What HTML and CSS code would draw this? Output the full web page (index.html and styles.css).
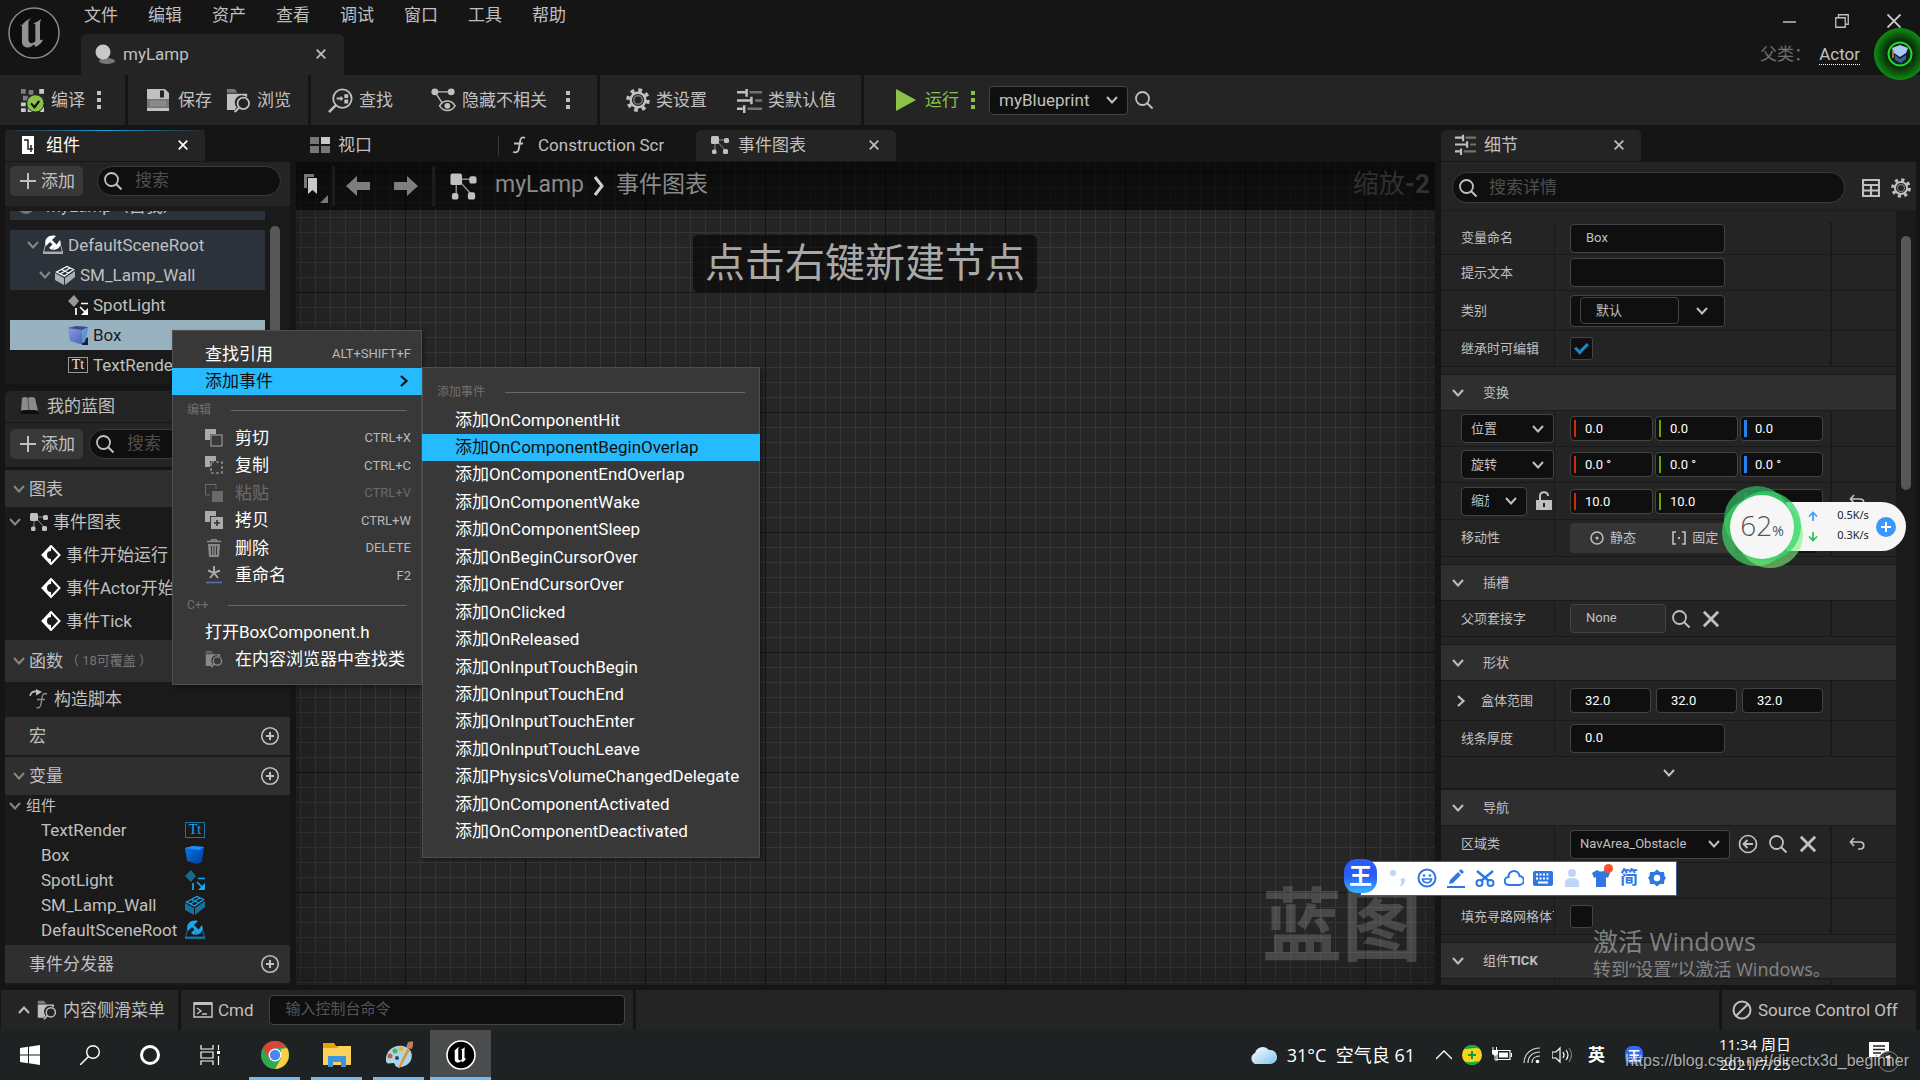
FILE: index.html
```
<!DOCTYPE html>
<html lang="zh-CN">
<head>
	<meta charset="utf-8">
	<title>myLamp</title>
	<link rel="stylesheet" href="styles.css">
</head>
<body>
	<svg class="defs" aria-hidden="true">
		<defs>
			<linearGradient id="boxside" x1="0" y1="0" x2="1" y2="1"><stop offset="0" stop-color="#8ea2e6"/><stop offset="1" stop-color="#3f57b5"/></linearGradient>
			<linearGradient id="bluebox" x1="0" y1="0" x2="1" y2="1"><stop offset="0" stop-color="#0a78e8"/><stop offset="1" stop-color="#003a9c"/></linearGradient>
			<linearGradient id="cloudfill" x1="0" y1="0" x2="1" y2="1"><stop offset="0" stop-color="#ffffff"/><stop offset="1" stop-color="#7fc4ee"/></linearGradient>
			<radialGradient id="orbfill"><stop offset=".45" stop-color="#0a1a0a"/><stop offset="1" stop-color="#0e8a10"/></radialGradient>
		</defs>
		<symbol id="i-down" viewBox="0 0 14 14"><path d="M2 4l5 5.500 5-5.500" fill="none" stroke="currentColor" stroke-width="2"/></symbol>
		<symbol id="i-up" viewBox="0 0 14 14"><path d="M2 10l5-5.500 5 5.500" fill="none" stroke="currentColor" stroke-width="2"/></symbol>
		<symbol id="i-right" viewBox="0 0 14 14"><path d="M4 2l5.500 5-5.500 5" fill="none" stroke="currentColor" stroke-width="2.200"/></symbol>
		<symbol id="i-x" viewBox="0 0 14 14"><path d="M2 2l10 10M12 2L2 12" fill="none" stroke="currentColor" stroke-width="2"/></symbol>
		<symbol id="i-search" viewBox="0 0 20 20"><circle cx="8.500" cy="8.500" r="6.500" fill="none" stroke="currentColor" stroke-width="1.800"/><path d="M13 13l5.500 5.500" stroke="currentColor" stroke-width="2"/></symbol>
		<symbol id="i-plus" viewBox="0 0 16 16"><path d="M8 0v16M0 8h16" stroke="currentColor" stroke-width="2"/></symbol>
		<symbol id="i-addc" viewBox="0 0 20 20"><circle cx="10" cy="10" r="8.300" fill="none" stroke="currentColor" stroke-width="1.600"/><path d="M10 6v8M6 10h8" stroke="currentColor" stroke-width="2"/></symbol>
		<symbol id="i-u" viewBox="0 0 40 40"><path d="M7 12c3-5 7-7 11-9-3 2-3.500 4-3.500 6.500V26c0 2.500 1 4.500 3 4.500s3.500-1 4.500-2V11c0-1-1-2-2.500-2 3-1 7-3 9-5-1 2-1.500 4-1.500 6v15c0 2 1 2.600 3.500 1.500-1.500 4-5 6.500-8.500 8l-1.500-3c-2 2.500-5 4-8 3.500-3.500-.500-5-3-5-6V13.500c0-2.500-.500-3.500-2-3z" fill="currentColor"/></symbol>
		<symbol id="i-graph" viewBox="0 0 20 20"><path d="M5 5h11M5 5v12M6 5l9 10" stroke="currentColor" stroke-width="1" opacity=".7"/><rect x="1" y="1" width="8" height="8" rx="1.500" fill="currentColor"/><rect x="14" y="3" width="5" height="5" rx="1.500" fill="currentColor"/><rect x="13" y="14" width="5" height="5" rx="1.500" fill="currentColor"/><rect x="2" y="14.500" width="4.500" height="4.500" rx="1.500" fill="currentColor"/></symbol>
		<symbol id="i-sliders" viewBox="0 0 26 26"><path d="M0 4.500h9M0 13h14M0 21.500h6" stroke="currentColor" stroke-width="2.600"/><path d="M13 4.500h13M19 13h7M11 21.500h15" stroke="currentColor" stroke-width="2.600" opacity=".5"/><path d="M10 1v8M15 9v8M7.500 18v8" stroke="currentColor" stroke-width="2.600"/></symbol>
		<symbol id="i-gear" viewBox="0 0 24 24"><circle cx="12" cy="12" r="9.800" fill="none" stroke="currentColor" stroke-width="4" stroke-dasharray="3.700 4"/><circle cx="12" cy="12" r="7.300" fill="none" stroke="currentColor" stroke-width="2.400"/><circle cx="12" cy="12" r="4.200" fill="none" stroke="currentColor" stroke-width="1.500" opacity=".55"/></symbol>
		<symbol id="i-browse" viewBox="0 0 26 26"><path d="M1 1h8l3 4H1z" fill="currentColor" opacity=".55"/><path d="M1 6h21v4a7 7 0 0 0-11 10l-2 3H1z" fill="currentColor"/><circle cx="18" cy="16" r="6" fill="none" stroke="currentColor" stroke-width="1.900"/><path d="M14 20l-5 5" stroke="currentColor" stroke-width="2.200"/></symbol>
		<symbol id="i-save" viewBox="0 0 24 24"><path d="M1 1h18l4 4v18H1z" fill="currentColor"/><path d="M1 11h22v9H1z" fill="#777"/><path d="M4 12.500h16v6H4z" fill="#8a8a8a"/><rect x="14" y="2.500" width="4" height="7" fill="#242424"/></symbol>
		<symbol id="i-compile" viewBox="0 0 26 26"><path d="M1 1h5v5H1zM9 2h5v5H9zM3 8h5v5H3zM11 9h5v5h-5z" fill="#7c7c7c"/><path d="M20 1h5v5h-5zM1 15h5v4H1zM1 21h5v4H1zM8 20h5v5H8zM21 20h4v5h-4z" fill="#c8c8c8"/><circle cx="16" cy="16" r="9" fill="#8bc24a" stroke="#1e2a12"/><path d="M11.500 16l3.500 4 5-6.500" fill="none" stroke="#111" stroke-width="2.200"/></symbol>
		<symbol id="i-find" viewBox="0 0 26 26"><circle cx="15" cy="11" r="9.600" fill="none" stroke="currentColor" stroke-width="1.900"/><path d="M8 18l-7 7" stroke="currentColor" stroke-width="2.600"/><path d="M9 10h5v2H9zM13 8l3 3-3 3zM17 6.500h4v4h-4zM17 12h4v4h-4z" fill="currentColor"/></symbol>
		<symbol id="i-hide" viewBox="0 0 26 26"><path d="M4 4h18M4 4l8 12" stroke="currentColor" stroke-width="1.500"/><circle cx="4" cy="4" r="3.600" fill="currentColor"/><circle cx="21" cy="4" r="3.600" fill="currentColor"/><path d="M9 18.500c4-6.500 12-6.500 16 0-4 6.500-12 6.500-16 0z" fill="#242424" stroke="currentColor" stroke-width="1.600"/><circle cx="17" cy="18.500" r="3" fill="currentColor"/></symbol>
		<symbol id="i-dots" viewBox="0 0 4 20"><path d="M0 1h4v4H0zM0 8h4v4H0zM0 15h4v4H0z" fill="currentColor"/></symbol>
		<symbol id="i-root" viewBox="0 0 20 20"><path d="M3 8L.500 17M17 8l2.500 9" stroke="currentColor" stroke-width="1" opacity=".6"/><path d="M3 11C0 4 6-1 13 1L9 5l5 5-2 2-5-5zM10 14.500L17 5c2 5-1 10-7 10z" fill="currentColor"/><path d="M6 13l4-4 3 2-4 4z" fill="currentColor"/><path d="M0 16.500h20V19H0z" fill="currentColor" opacity=".6"/></symbol>
		<symbol id="i-mesh" viewBox="0 0 20 20"><path d="M0 8l9 5v7l-9-5zM10 13l10-7v6l-10 8z" fill="currentColor" opacity=".6"/><path d="M1.500 7L12 1.500l6.500 3L9.500 11zM6.500 4.500l7 3.500M5 9l10-6" fill="none" stroke="currentColor" stroke-width="1.300"/></symbol>
		<symbol id="i-spot" viewBox="0 0 20 20"><path d="M6 0l5 6-5 6-6-6z" fill="currentColor" opacity=".55"/><path d="M8 13v7M13 8.500h7M12 12l6 6" stroke="currentColor" stroke-width="1.700"/><path d="M20 13v7h-7z" fill="currentColor"/></symbol>
		<symbol id="i-box" viewBox="0 0 20 20"><path d="M13 17l7-5v8h-6z" fill="#16222c"/><path d="M0 3l8-2 12 1-3 15-5 2L2 16z" fill="url(#boxside)"/><path d="M14 5l5-3-2 15-3 1z" fill="#5fc0e0" opacity=".5"/><path d="M0 3l8-2 12 1-6 3z" fill="#3c4c86"/></symbol>
		<symbol id="i-bluebox" viewBox="0 0 20 20"><path d="M0 3l8-2 11 1-2 15-5 2L2 16z" fill="url(#bluebox)"/><path d="M0 3l8-2 11 1-5 3z" fill="#1990ff"/></symbol>
		<symbol id="i-event" viewBox="0 0 20 20"><path d="M10 1l8.500 9-8.500 9-8.500-9z" fill="none" stroke="currentColor" stroke-width="2"/><path d="M10 2v4a4 4 0 0 0 0 8v4l-8-8z" fill="currentColor"/></symbol>
		<symbol id="i-fn" viewBox="0 0 20 20"><path d="M18 5c-3-1.500-4.500 0-5 4l-1 6c-.500 3-2 4.500-4.500 3.500M8 10.500h8" fill="none" stroke="currentColor" stroke-width="1.400" opacity=".7"/><path d="M1 7c1-4 4-5 7-4.500" fill="none" stroke="currentColor" stroke-width="1.600"/><path d="M7 0l6 3-6 3.500z" fill="currentColor"/></symbol>
		<symbol id="i-f" viewBox="0 0 14 20"><path d="M13 3c-3-1.500-4.500 0-5 4l-1 6c-.500 3.500-2 5-6 4M2 8.500h9" fill="none" stroke="currentColor" stroke-width="1.800"/></symbol>
		<symbol id="i-cut" viewBox="0 0 18 18"><path d="M0 0h11v5H5v6H0z" fill="currentColor"/><rect x="6" y="6" width="11" height="11" fill="none" stroke="currentColor" stroke-width="1"/></symbol>
		<symbol id="i-copy" viewBox="0 0 18 18"><path d="M0 0h11v5H5v6H0z" fill="currentColor"/><rect x="6" y="6" width="11" height="11" fill="none" stroke="currentColor" stroke-width="1.200" stroke-dasharray="3 2"/></symbol>
		<symbol id="i-paste" viewBox="0 0 18 18"><path d="M11 5V.500H.500V11H5" fill="none" stroke="currentColor"/><rect x="7" y="7" width="11" height="11" fill="currentColor"/></symbol>
		<symbol id="i-dup" viewBox="0 0 18 18"><path d="M0 0h11v5H5v6H0z" fill="currentColor"/><rect x="6" y="6" width="12" height="12" fill="currentColor"/><path d="M12 9v6M9 12h6" stroke="#333" stroke-width="1.600"/></symbol>
		<symbol id="i-trash" viewBox="0 0 18 18"><path d="M2 2.500h14M6 2c0-2 6-2 6 0" fill="none" stroke="currentColor" stroke-width="1.600"/><path d="M3 5h12l-1 13H4z" fill="currentColor"/><path d="M6.500 7v9M9 7v9M11.500 7v9" stroke="#383838"/></symbol>
		<symbol id="i-rename" viewBox="0 0 18 18"><path d="M9 0v7M3 4.500L9 7l6-2.500M5 12l4-5 4 5" stroke="currentColor" stroke-width="2" fill="none"/><path d="M1 16.500h16" stroke="#5973b0" stroke-width="1.500"/></symbol>
		<symbol id="i-reset" viewBox="0 0 16 14"><path d="M5 1L1.500 5 5 9M2 5h9c5 0 5 7 0 7H9" fill="none" stroke="currentColor" stroke-width="1.700"/></symbol>
	</svg>

	<header class="titlebar">
		<svg class="ue-logo" viewBox="0 0 54 54"><circle cx="27" cy="27" r="25" fill="#0e0e0e" stroke="#8a8a8a" stroke-width="1.500"/><use href="#i-u" x="8" y="9" width="37" height="37" color="#8e9294"/></svg>
		<div class="title-main">
			<nav class="menubar">
				<button>文件</button><button>编辑</button><button>资产</button><button>查看</button><button>调试</button><button>窗口</button><button>工具</button><button>帮助</button>
			</nav>
			<div class="doc-tab">
				<svg class="s20" viewBox="0 0 20 20"><ellipse cx="12" cy="17" rx="8" ry="3" fill="#777"/><circle cx="8" cy="8" r="7.500" fill="#c8c8c8"/></svg>
				<span>myLamp</span>
				<button class="close" aria-label="close"><svg><use href="#i-x"/></svg></button>
			</div>
		</div>
		<div class="title-right">
			<div class="win-btns">
				<button aria-label="minimize"><svg viewBox="0 0 14 14"><path d="M0 8h13" stroke="#c0c0c0" stroke-width="1.500"/></svg></button>
				<button aria-label="restore"><svg viewBox="0 0 14 14"><path d="M.750 3.750h9.500v9.500H.750zM3.500 3V.750h9.750v9.500H11" fill="none" stroke="#c0c0c0" stroke-width="1.300"/></svg></button>
				<button aria-label="close window"><svg viewBox="0 0 14 14"><path d="M.500.500l13 13M13.500.500l-13 13" stroke="#d0d0d0" stroke-width="1.800"/></svg></button>
			</div>
			<p class="parent">父类： <a href="#">Actor</a></p>
		</div>
	</header>

	<div class="toolbar">
		<div class="group g1">
			<button><svg class="s25"><use href="#i-compile"/></svg>编译</button>
			<button class="dots" aria-label="more"><svg><use href="#i-dots"/></svg></button>
		</div>
		<div class="group g2">
			<button class="wide"><svg class="s24"><use href="#i-save"/></svg>保存</button>
			<button><svg class="s25"><use href="#i-browse"/></svg>浏览</button>
		</div>
		<div class="group g3">
			<button class="far"><svg class="s25"><use href="#i-find"/></svg>查找</button>
			<button><svg class="s25"><use href="#i-hide"/></svg>隐藏不相关</button>
			<button class="dots" aria-label="more"><svg><use href="#i-dots"/></svg></button>
		</div>
		<div class="group g4">
			<button><svg class="s24"><use href="#i-gear"/></svg>类设置</button>
			<button><svg class="s25"><use href="#i-sliders"/></svg>类默认值</button>
		</div>
		<div class="group g5">
			<button class="play wide"><svg class="s22" viewBox="0 0 22 22"><path d="M1 0l20 11L1 22z" fill="currentColor"/></svg>运行</button>
			<button class="dots play" aria-label="play options"><svg><use href="#i-dots"/></svg></button>
			<span class="sel debug"><select aria-label="debug object"><option>myBlueprint</option></select><svg><use href="#i-down"/></svg></span>
			<button class="lookup" aria-label="find object"><svg class="s20"><use href="#i-search"/></svg></button>
		</div>
	</div>

	<main class="work">
		<section class="left">
			<div class="tabs">
				<div class="tab focus">
					<svg class="t-ico" viewBox="0 0 12 18"><path d="M0 0h12v18H0z" fill="#fff"/><path d="M2 4h4v9h5M6 4v3M9 9v7" fill="none" stroke="#222" stroke-width="1.500"/></svg>
					<span>组件</span>
					<button class="close" aria-label="close"><svg><use href="#i-x"/></svg></button>
				</div>
			</div>
			<div class="panel-tools">
				<button class="add"><svg><use href="#i-plus"/></svg>添加</button>
				<label class="search"><svg class="s20"><use href="#i-search"/></svg><input type="text" placeholder="搜索"></label>
			</div>
			<div class="tree-wrap">
				<ul class="tree">
					<li class="self"><span><svg class="s20" viewBox="0 0 20 20"><circle cx="10" cy="9" r="9" fill="#777"/></svg>myLamp（自我）</span></li>
					<li class="tint d1"><svg class="s14 arrow"><use href="#i-down"/></svg><svg class="s20 white"><use href="#i-root"/></svg>DefaultSceneRoot</li>
					<li class="tint d2"><svg class="s14 arrow"><use href="#i-down"/></svg><svg class="s20 white"><use href="#i-mesh"/></svg>SM_Lamp_Wall</li>
					<li class="d3"><svg class="s20 white"><use href="#i-spot"/></svg>SpotLight</li>
					<li class="d3 picked"><svg class="s20"><use href="#i-box"/></svg>Box</li>
					<li class="d3"><span class="tt">Tt</span>TextRender</li>
				</ul>
				<div class="thumb tree-thumb"></div>
			</div>
			<div class="tabs second">
				<div class="tab">
					<svg class="s20" viewBox="0 0 20 20"><path d="M3 2q3-2 6 0 4-2 7 0l3 13q-4-2-8 0-5-2-9 0z" fill="#8b8b8b"/><path d="M9 2l1 13" stroke="#555"/><path d="M1 15q9-2 18 0l1 3H2z" fill="#0e0e0e"/></svg>
					<span>我的蓝图</span>
				</div>
			</div>
			<div class="panel-tools bp-tools">
				<button class="add"><svg><use href="#i-plus"/></svg>添加</button>
				<label class="search"><svg class="s20"><use href="#i-search"/></svg><input type="text" placeholder="搜索"></label>
			</div>
			<div class="blueprint">
				<h3 class="head graphs"><svg class="s14 arrow"><use href="#i-down"/></svg>图表</h3>
				<ul class="events">
					<li class="top"><svg class="s14 arrow"><use href="#i-down"/></svg><svg class="s20"><use href="#i-graph"/></svg>事件图表</li>
					<li><svg class="s20 white"><use href="#i-event"/></svg>事件开始运行</li>
					<li><svg class="s20 white"><use href="#i-event"/></svg>事件Actor开始重叠</li>
					<li><svg class="s20 white"><use href="#i-event"/></svg>事件Tick</li>
				</ul>
				<h3 class="head fn-head"><svg class="s14 arrow"><use href="#i-down"/></svg>函数<small>（ 18可覆盖 ）</small></h3>
				<p class="fn"><svg class="s20"><use href="#i-fn"/></svg>构造脚本</p>
				<h3 class="head flat macros">宏<button aria-label="add macro"><svg class="s20"><use href="#i-addc"/></svg></button></h3>
				<h3 class="head"><svg class="s14 arrow"><use href="#i-down"/></svg>变量<button aria-label="add variable"><svg class="s20"><use href="#i-addc"/></svg></button></h3>
				<p class="cat"><svg class="s14 arrow"><use href="#i-down"/></svg>组件</p>
				<ul class="vars">
					<li><span>TextRender</span><i class="tt">Tt</i></li>
					<li><span>Box</span><svg class="s20"><use href="#i-bluebox"/></svg></li>
					<li><span>SpotLight</span><svg class="s20"><use href="#i-spot"/></svg></li>
					<li><span>SM_Lamp_Wall</span><svg class="s20"><use href="#i-mesh"/></svg></li>
					<li><span>DefaultSceneRoot</span><svg class="s20"><use href="#i-root"/></svg></li>
				</ul>
				<h3 class="head flat">事件分发器<button aria-label="add dispatcher"><svg class="s20"><use href="#i-addc"/></svg></button></h3>
			</div>
		</section>

		<section class="center">
			<div class="tabs">
				<div class="tab idle viewport"><svg class="s20" viewBox="0 0 20 20"><path d="M0 2h9v7H0zM0 11h9v7H0zM11 11h9v7h-9z" fill="#777"/><path d="M11 2h9v7h-9z" fill="#c8c8c8"/></svg><span>视口</span></div>
				<div class="tab idle construct"><svg class="f-ico"><use href="#i-f"/></svg><span class="clip">Construction Script</span></div>
				<div class="tab"><svg class="s20"><use href="#i-graph"/></svg><span>事件图表</span><button class="close" aria-label="close"><svg><use href="#i-x"/></svg></button></div>
			</div>
			<div class="graph">
				<div class="crumbs">
					<button class="bookmark" aria-label="bookmarks"><svg viewBox="0 0 30 40"><path d="M3 8h10v3H6v11H3z" fill="#777"/><path d="M7 12h9v16l-4.500-4L7 28z" fill="#c8c8c8"/><path d="M27 29v8h-8z" fill="#777"/></svg></button>
					<div class="nav-btns">
						<button aria-label="back"><svg viewBox="0 0 24 20"><path d="M0 10L11 0v6h13v8H11v6z" fill="#7e7e7e"/></svg></button>
						<button aria-label="forward"><svg viewBox="0 0 24 20"><path d="M24 10L13 0v6H0v8h13v6z" fill="#7e7e7e"/></svg></button>
					</div>
					<svg class="s29"><use href="#i-graph"/></svg>
					<span class="path">myLamp<svg class="sep" viewBox="0 0 14 20"><path d="M3 1l7 9-7 9" fill="none" stroke="#d0d0d0" stroke-width="3"/></svg>事件图表</span>
					<span class="zoom">缩放<b>-2</b></span>
				</div>
				<p class="hint">点击右键新建节点</p>
				<p class="mark">蓝图</p>
			</div>
		</section>

		<section class="right">
			<div class="tabs">
				<div class="tab"><svg class="s21"><use href="#i-sliders"/></svg><span>细节</span><button class="close" aria-label="close"><svg><use href="#i-x"/></svg></button></div>
			</div>
			<div class="detail-tools">
				<label class="search"><svg class="s20"><use href="#i-search"/></svg><input type="text" placeholder="搜索详情"></label>
				<button aria-label="property matrix"><svg class="s18" viewBox="0 0 18 18"><path d="M1 1h16v16H1zM1 6h16M1 11.500h16M9 6v11" fill="none" stroke="currentColor" stroke-width="2.200"/></svg></button>
				<button aria-label="settings"><svg class="s20"><use href="#i-gear"/></svg></button>
			</div>
			<div class="details">
				<div class="rows">
					<div class="row first"><label for="vname">变量命名</label><div class="val"><input id="vname" class="text" value="Box"></div><i></i></div>
					<div class="row"><label for="tip">提示文本</label><div class="val"><input id="tip" class="text"></div><i></i></div>
					<div class="row tall"><label for="cat">类别</label><div class="val"><span class="combo"><input id="cat" value="默认"><svg class="s14"><use href="#i-down"/></svg></span></div><i></i></div>
					<div class="row"><label for="edit">继承时可编辑</label><div class="val"><input id="edit" type="checkbox" class="check" checked></div><i></i></div>
					<h4 class="gap"><svg class="s14"><use href="#i-down"/></svg>变换</h4>
					<div class="row"><div class="name"><span class="sel loc"><select aria-label="location"><option>位置</option></select><svg><use href="#i-down"/></svg></span></div><div class="val"><div class="vec"><input class="r" aria-label="X" value="0.0"><input class="g" aria-label="Y" value="0.0"><input class="b" aria-label="Z" value="0.0"></div></div><i></i></div>
					<div class="row"><div class="name"><span class="sel loc"><select aria-label="rotation"><option>旋转</option></select><svg><use href="#i-down"/></svg></span></div><div class="val"><div class="vec"><input class="r" aria-label="X" value="0.0 °"><input class="g" aria-label="Y" value="0.0 °"><input class="b" aria-label="Z" value="0.0 °"></div></div><i></i></div>
					<div class="row mid"><div class="name"><span class="sel scale"><select aria-label="scale"><option>缩放</option></select><svg><use href="#i-down"/></svg></span><svg class="lock" viewBox="0 0 16 20"><path d="M4 9V5c0-5 8-5 8 0" fill="none" stroke="currentColor" stroke-width="2"/><path d="M0 9h16v10H0z" fill="currentColor"/><path d="M7 12h2v4H7z" fill="#222"/></svg></div><div class="val"><div class="vec"><input class="r" aria-label="X" value="10.0"><input class="g" aria-label="Y" value="10.0"><input class="b" aria-label="Z"></div></div><i><svg class="reset"><use href="#i-reset"/></svg></i></div>
					<div class="row mid"><span class="name">移动性</span><div class="val"><div class="seg"><button><svg class="s14" viewBox="0 0 14 14"><circle cx="7" cy="7" r="6" fill="none" stroke="currentColor" stroke-width="1.500"/><circle cx="7" cy="7" r="1.500" fill="currentColor"/></svg>静态</button><button><svg class="s14" viewBox="0 0 14 14"><path d="M4 1H1v12h3M10 1h3v12h-3" fill="none" stroke="currentColor" stroke-width="1.600"/><path d="M6 6h2v2H6z" fill="currentColor"/></svg>固定</button><button class="on" aria-label="movable"></button></div></div><i></i></div>
					<h4 class="gap"><svg class="s14"><use href="#i-down"/></svg>插槽</h4>
					<div class="row"><label for="socket">父项套接字</label><div class="val"><input id="socket" class="text socket" value="None" readonly><button aria-label="browse socket"><svg class="s20"><use href="#i-search"/></svg></button><button aria-label="clear socket"><svg class="s20"><use href="#i-x"/></svg></button></div><i></i></div>
					<h4 class="gap"><svg class="s14"><use href="#i-down"/></svg>形状</h4>
					<div class="row tall"><div class="name fold"><svg class="s14"><use href="#i-right"/></svg>盒体范围</div><div class="val"><div class="vec plain"><input aria-label="X" value="32.0"><input aria-label="Y" value="32.0"><input aria-label="Z" value="32.0"></div></div><i></i></div>
					<div class="row"><label for="thick">线条厚度</label><div class="val"><input id="thick" class="text thick" value="0.0"></div><i></i></div>
					<button class="more" aria-label="show advanced"><svg class="s14"><use href="#i-down"/></svg></button>
					<h4><svg class="s14"><use href="#i-down"/></svg>导航</h4>
					<div class="row mid"><label for="area">区域类</label><div class="val"><span class="sel area"><select id="area"><option>NavArea_Obstacle</option></select><svg><use href="#i-down"/></svg></span><button aria-label="use selected"><svg class="s20" viewBox="0 0 20 20"><circle cx="10" cy="10" r="8.500" fill="none" stroke="currentColor" stroke-width="1.700"/><path d="M15 10H6M9.500 6L5.500 10l4 4" fill="none" stroke="currentColor" stroke-width="1.800"/></svg></button><button aria-label="browse class"><svg class="s20"><use href="#i-search"/></svg></button><button aria-label="clear class"><svg class="s20"><use href="#i-x"/></svg></button></div><i><svg class="reset"><use href="#i-reset"/></svg></i></div>
					<div class="row"><span class="name"></span><div class="val"></div><i></i></div>
					<div class="row"><label for="fill">填充寻路网格体下方</label><div class="val"><input id="fill" type="checkbox" class="check"></div><i></i></div>
					<h4 class="gap"><svg class="s14"><use href="#i-down"/></svg>组件<b>TICK</b></h4>
					<div class="row"><span class="name"></span><div class="val"></div><i></i></div>
				</div>
				<div class="thumb detail-thumb"></div>
			</div>
		</section>

		<div class="menu ctx">
			<ul>
				<li><button>查找引用<kbd>ALT+SHIFT+F</kbd></button></li>
				<li><button class="hot">添加事件<svg class="s14"><use href="#i-right"/></svg></button></li>
			</ul>
			<h5>编辑</h5>
			<ul class="iconed">
				<li><button><svg class="s18"><use href="#i-cut"/></svg>剪切<kbd>CTRL+X</kbd></button></li>
				<li><button><svg class="s18"><use href="#i-copy"/></svg>复制<kbd>CTRL+C</kbd></button></li>
				<li><button disabled><svg class="s18"><use href="#i-paste"/></svg>粘贴<kbd>CTRL+V</kbd></button></li>
				<li><button><svg class="s18"><use href="#i-dup"/></svg>拷贝<kbd>CTRL+W</kbd></button></li>
				<li><button><svg class="s18 dim"><use href="#i-trash"/></svg>删除<kbd>DELETE</kbd></button></li>
				<li><button><svg class="s18"><use href="#i-rename"/></svg>重命名<kbd>F2</kbd></button></li>
			</ul>
			<h5>C++</h5>
			<ul>
				<li><button>打开BoxComponent.h</button></li>
				<li><button><svg class="s18 dim"><use href="#i-browse"/></svg>在内容浏览器中查找类</button></li>
			</ul>
		</div>

		<div class="menu sub">
			<h5>添加事件</h5>
			<ul>
				<li><button>添加OnComponentHit</button></li>
				<li><button class="hot">添加OnComponentBeginOverlap</button></li>
				<li><button>添加OnComponentEndOverlap</button></li>
				<li><button>添加OnComponentWake</button></li>
				<li><button>添加OnComponentSleep</button></li>
				<li><button>添加OnBeginCursorOver</button></li>
				<li><button>添加OnEndCursorOver</button></li>
				<li><button>添加OnClicked</button></li>
				<li><button>添加OnReleased</button></li>
				<li><button>添加OnInputTouchBegin</button></li>
				<li><button>添加OnInputTouchEnd</button></li>
				<li><button>添加OnInputTouchEnter</button></li>
				<li><button>添加OnInputTouchLeave</button></li>
				<li><button>添加PhysicsVolumeChangedDelegate</button></li>
				<li><button>添加OnComponentActivated</button></li>
				<li><button>添加OnComponentDeactivated</button></li>
			</ul>
		</div>
	</main>

	<footer class="status">
		<button class="drawer"><svg class="s14"><use href="#i-up"/></svg><svg class="s20"><use href="#i-browse"/></svg>内容侧滑菜单</button>
		<div class="console">
			<svg class="s20" viewBox="0 0 20 20"><path d="M1 3h18v14H1z" fill="none" stroke="currentColor" stroke-width="1.500"/><path d="M1 2h18v3H1z" fill="currentColor"/><path d="M4 8l4 3-4 3M9 14h5" fill="none" stroke="currentColor" stroke-width="1.400"/></svg>
			<label for="cmd">Cmd</label>
			<input id="cmd" type="text" placeholder="输入控制台命令">
		</div>
		<div class="filler"></div>
		<button class="source"><svg class="s20" viewBox="0 0 20 20"><circle cx="10" cy="10" r="8.500" fill="none" stroke="currentColor" stroke-width="2"/><path d="M16 4L4 16" stroke="currentColor" stroke-width="2"/></svg>Source Control Off</button>
	</footer>

	<footer class="taskbar">
		<button aria-label="start"><svg class="s20" viewBox="0 0 20 20"><path d="M0 3l8-1.200V9.500H0zM9 1.700L20 0v9.500H9zM0 10.500h8v7.700L0 17zM9 10.500h11V20L9 18.300z" fill="#fff"/></svg></button>
		<button aria-label="search"><svg class="s20" viewBox="0 0 20 20"><circle cx="13" cy="7" r="6.300" fill="none" stroke="#fff" stroke-width="1.400"/><path d="M8.500 11.500L0 20" stroke="#fff" stroke-width="1.500"/></svg></button>
		<button aria-label="cortana"><svg class="s20" viewBox="0 0 20 20"><circle cx="10" cy="10" r="8.500" fill="none" stroke="#fff" stroke-width="3"/></svg></button>
		<button aria-label="task view"><svg class="s20" viewBox="0 0 20 20"><path d="M1 0v4h12V0M1 20v-4h12v4M1 7h12v6H1zM18.500 0v5M18.500 11v9" fill="none" stroke="#fff" stroke-width="1.200"/><path d="M17 6h3v3h-3z" fill="#fff"/></svg></button>
		<button class="app" aria-label="chrome"><svg class="s28" viewBox="0 0 28 28"><circle cx="14" cy="14" r="14" fill="#30a852"/><path d="M14 0a14 14 0 0 1 12.100 7H14L8 17.500 1.900 7A14 14 0 0 1 14 0z" fill="#dc4437"/><path d="M26.100 7A14 14 0 0 1 14 28l6-10.500V8z" fill="#fccd3f"/><circle cx="14" cy="14" r="6.500" fill="#fff"/><circle cx="14" cy="14" r="5.200" fill="#4a86f0"/></svg></button>
		<button class="app" aria-label="explorer"><svg class="s28" viewBox="0 0 28 28"><path d="M0 2h11l2 3h15v3H0z" fill="#e5a50a"/><path d="M0 7h14l2-2h12v19H0z" fill="#fbd15a"/><path d="M5 15h18v11h-5v-5h-8v5H5z" fill="#3b94dc"/></svg></button>
		<button class="app" aria-label="paint"><svg class="s28" viewBox="0 0 28 28"><path d="M1 20C0 10 9 3 18 5s10 9 8 14-9 8-14 7c-3-1-1-4-4-4s-6 2-7-2z" fill="#a9d6ef"/><circle cx="5" cy="15" r="2.500" fill="#e5532d"/><circle cx="10" cy="10" r="2.500" fill="#57b04a"/><circle cx="16" cy="8" r="2.500" fill="#f0b429"/><circle cx="12" cy="17" r="2" fill="#2a4a66"/><path d="M13 27L22 8l3 1-10 18z" fill="#e8912c"/><path d="M21 7l2-6 6-1-2 8z" fill="#b98457"/></svg></button>
		<button class="app active" aria-label="unreal editor"><svg class="s30" viewBox="0 0 30 30"><circle cx="15" cy="15" r="14" fill="#000" stroke="#fff" stroke-width="1.600"/><use href="#i-u" x="5" y="5" width="20" height="20" color="#fff"/></svg></button>
		<div class="tray">
			<svg class="cloud" viewBox="0 0 28 20"><path d="M6 19a6 6 0 0 1 0-11 8 8 0 0 1 14-3 7 7 0 0 1 2 14z" fill="url(#cloudfill)"/></svg>
			<span class="weather">31°C&nbsp; 空气良 61</span>
			<svg class="s16" viewBox="0 0 16 16"><path d="M0 12l8-8 8 8" fill="none" stroke="#fff" stroke-width="1.300"/></svg>
			<svg class="s20" viewBox="0 0 20 20"><circle cx="10" cy="10" r="10" fill="#f8d31c"/><path d="M2 4a10 10 0 0 1 16 0c-5-2-8 0-16 0zM18 16a10 10 0 0 1-16 0c5 2 9 1 16 0z" fill="#17a745"/><path d="M10 6v8M6 10h8" stroke="#0d9a3b" stroke-width="2"/></svg>
			<svg class="s20" viewBox="0 0 20 20"><path d="M5 5.500h13v9H5z" fill="none" stroke="#fff" stroke-width="1.200"/><path d="M7 7.500h9v5H7zM19 8h1v4h-1zM0 5h6v4l-3 2-3-2z" fill="#fff"/><path d="M1 2v3M4.500 2v3M3 10v5h3" stroke="#fff" fill="none"/></svg>
			<svg class="s20" viewBox="0 0 20 20"><path d="M2 18C2 9 9 3 18 3M6 18c0-7 5-11 12-11M10 18c0-4 3-7 8-7" fill="none" stroke="#ddd" stroke-width="1.200"/><circle cx="15.500" cy="16.500" r="1.800" fill="#fff"/></svg>
			<svg class="s20" viewBox="0 0 20 20"><path d="M0 7h4l4-4v14l-4-4H0z" fill="none" stroke="#fff" stroke-width="1.200"/><path d="M11 7q2 3 0 6M14 5q4 5 0 10" fill="none" stroke="#fff" stroke-width="1.200"/><path d="M17 3q5 7 0 14" fill="none" stroke="#777" stroke-width="1.200"/></svg>
			<span class="lang">英</span>
			<span class="ime-mini">王</span>
			<div class="clock"><span>11:34 周日</span><span>2021/7/25</span></div>
			<div class="notice"><svg viewBox="0 0 20 18"><path d="M0 0h20v15h-4v3l-4-3H0z" fill="#fff"/><path d="M4 4h12M4 7.500h12M4 11h8" stroke="#222" stroke-width="1.300"/></svg><b>1</b></div>
		</div>
	</footer>

	<!-- floating desktop tools -->
	<svg class="orb" viewBox="0 0 52 52"><circle cx="26" cy="26" r="25.500" fill="url(#orbfill)" stroke="#128a14"/><circle cx="26" cy="26" r="11.500" fill="#142028" stroke="#1be01b" stroke-width="2"/><path d="M18 20l8-3 8 3-2 5-6 4-6-4z" fill="#a9cdf0"/><path d="M21 27l5 4 6-4v4l-5 4-6-3z" fill="#3d5f98"/><path d="M19 22v8" stroke="#c99a3a" stroke-width="1.500"/></svg>
	<div class="netball">
		<div class="speeds">
			<svg viewBox="0 0 10 34"><path d="M5 11V3M1 6.500L5 2.500l4 4" fill="none" stroke="#3a9bff" stroke-width="1.700"/><path d="M5 22v8M1 26.500l4 4 4-4" fill="none" stroke="#27bf55" stroke-width="1.700"/></svg>
			<p><span>0.5K/s</span><span>0.3K/s</span></p>
			<button aria-label="boost"><svg class="s20" viewBox="0 0 20 20"><circle cx="10" cy="10" r="10" fill="#3a98fb"/><path d="M10 5v10M5 10h10" stroke="#fff" stroke-width="2"/></svg></button>
		</div>
		<svg class="glow" viewBox="0 0 84 88"><circle cx="37" cy="37" r="33" fill="#2c9a55" opacity=".9"/><circle cx="36" cy="50" r="34" fill="#3fd465" opacity=".7"/><circle cx="50" cy="53" r="33" fill="#7ef27f" opacity=".6"/><circle cx="46" cy="44" r="35" fill="#35d46c" opacity=".75"/><circle cx="42" cy="45" r="32" fill="#f6f6f6"/></svg>
		<div class="ball">62<small>%</small></div>
	</div>
	<div class="ime">
		<b class="ime-logo">王</b>
		<svg viewBox="0 0 20 20" class="faint"><circle cx="5" cy="5" r="3" fill="currentColor"/><path d="M13 12a2 2 0 1 1 3 2q0 3-4 4 2-2 2-3z" fill="currentColor" stroke="currentColor"/></svg>
		<svg viewBox="0 0 20 20"><circle cx="10" cy="10" r="8.500" fill="none" stroke="currentColor" stroke-width="2"/><path d="M5.500 11c1 5 8 5 9 0z" fill="none" stroke="currentColor" stroke-width="1.600"/><circle cx="7" cy="7.500" r="1.300" fill="currentColor"/><circle cx="13" cy="7.500" r="1.300" fill="currentColor"/></svg>
		<svg viewBox="0 0 20 20"><path d="M1 19h18" stroke="currentColor" stroke-width="2"/><path d="M3 16l1-4 8-8 3 3-8 8zM13 3l2-2 3 3-2 2z" fill="currentColor"/></svg>
		<svg viewBox="0 0 20 20"><path d="M2 3l12 10M18 3L6 13" stroke="currentColor" stroke-width="2.400"/><circle cx="4.500" cy="15" r="3" fill="none" stroke="currentColor" stroke-width="2"/><circle cx="15.500" cy="15" r="3" fill="none" stroke="currentColor" stroke-width="2"/></svg>
		<svg viewBox="0 0 20 20"><path d="M5 17a4 4 0 0 1-.500-8 5.500 5.500 0 0 1 11-1A4.500 4.500 0 0 1 15 17z" fill="none" stroke="currentColor" stroke-width="2"/></svg>
		<svg viewBox="0 0 20 20"><rect y="3" width="20" height="15" rx="2" fill="currentColor"/><path d="M3 6.500h14M3 10.500h14" stroke="#fff" stroke-width="2" stroke-dasharray="2 1.500"/><path d="M5 14.500h10" stroke="#fff" stroke-width="2"/></svg>
		<svg viewBox="0 0 20 20" class="faint"><circle cx="10" cy="5" r="4" fill="currentColor"/><path d="M3 19v-4q0-5 7-5t7 5v4z" fill="currentColor"/></svg>
		<svg viewBox="0 0 20 20"><path d="M1 5l5-3q4 3 8 0l5 3-2 5-2-1v10H5V9l-2 1z" fill="currentColor"/></svg>
		<span>简</span>
		<svg viewBox="0 0 20 20"><path d="M10 1.500l3 2.500 4 0 .500 4L19 10l-1.500 2-.500 4h-4l-3 2.500L7 16H3l-.500-4L1 10l1.500-2L3 4h4z" fill="currentColor"/><circle cx="10" cy="10" r="3.200" fill="#fff"/></svg>
		<i class="red-dot"></i>
	</div>
	<div class="activate"><p>激活 Windows</p><p>转到“设置”以激活 Windows。</p></div>
	<div class="blog-url">https://blog.csdn.net/directx3d_beginner</div>
</body>
</html>
```
FILE: styles.css
```
* {box-sizing: border-box;}
body {
	margin: 0;
	height: 100vh;
	display: flex;
	flex-direction: column;
	overflow: hidden;
	position: relative;
	background: #151515;
	color: #c0c0c0;
	font: 17px/20px Roboto, "Noto Sans CJK SC", sans-serif;
}
ul, p, h3, h4, h5 {margin: 0; padding: 0; list-style: none; font-weight: normal;}
button {border: 0; padding: 0; background: none; color: inherit; font: inherit; display: flex; align-items: center; white-space: nowrap;}
input, select {font: inherit; color: inherit; min-width: 0; margin: 0;}
svg {flex: none; display: block;}
i {font-style: normal;}
.defs {position: absolute; width: 0; height: 0;}
.s14 {width: 14px; height: 14px;}
.s16 {width: 16px; height: 16px;}
.s18 {width: 18px; height: 18px;}
.s20 {width: 20px; height: 20px;}
.s21 {width: 21px; height: 21px;}
.s22 {width: 22px; height: 22px;}
.s24 {width: 24px; height: 24px;}
.s25 {width: 25px; height: 25px;}
.s28 {width: 28px; height: 28px;}
.s29 {width: 29px; height: 29px;}
.s30 {width: 30px; height: 30px;}
.white {color: #fff;}
.dim {opacity: .7;}

/* title bar */
.titlebar {display: flex; height: 75px; flex: none;}
.ue-logo {width: 54px; height: 54px; margin: 6px 20px 0 7px;}
.title-main {display: flex; flex-direction: column; justify-content: space-between;}
.menubar {display: flex; gap: 30px; padding: 5px 0 0 3px;}
.doc-tab {display: flex; align-items: center; width: 263px; height: 41px; padding: 0 17px 2px 14px; border-radius: 5px 5px 0 0; background: #242424;}
.doc-tab span {margin-left: 8px;}
.close {margin-left: auto;}
.close svg {width: 12px; height: 12px;}
.title-right {margin-left: auto; display: flex; flex-direction: column; align-items: flex-end;}
.win-btns {display: flex; gap: 38px; padding: 14px 19px 0 0;}
.win-btns svg {width: 14px; height: 14px;}
.parent {padding: 16px 60px 0 0; color: #6f6f6f;}
.parent a {color: #c0c0c0; text-decoration: none; border-bottom: 1px dotted #fff; margin-left: 4px;}

/* main toolbar */
.toolbar {display: flex; gap: 3px; height: 50px; flex: none;}
.group {display: flex; align-items: center; background: #242424;}
.group button {gap: 6px;}
.group .wide {gap: 8px;}
.group .dots svg {width: 4px; height: 20px;}
.g1 {gap: 12px; padding: 0 24px 0 20px;}
.g2 {gap: 14px; padding: 0 17px 0 18px;}
.g3 {gap: 19px; padding: 0 27px 0 17px;}
.g3 .far {margin-right: 19px;}
.g4 {gap: 30px; padding: 0 25px 0 26px;}
.g5 {gap: 12px; padding: 0 0 0 31px; flex: 1;}
.play {color: #8bc34a;}
.g5 .lookup {margin-left: -6px;}
.sel {position: relative; display: flex; align-items: center;}
.sel select {appearance: none; width: 100%; height: 29px; padding: 0 28px 0 9px; border: 1px solid #444; border-radius: 4px; background: #0f0f0f; outline: 0;}
.sel svg {position: absolute; right: 9px; width: 14px; height: 14px; pointer-events: none;}
.debug {width: 139px; margin-left: 2px;}

/* docked panels */
.work {display: flex; gap: 6px; flex: 1; min-height: 0; padding: 5px 4px 0 5px;}
.left {width: 285px; flex: none; display: flex; flex-direction: column;}
.center {flex: 1; min-width: 0; display: flex; flex-direction: column;}
.right {width: 475px; flex: none; display: flex; flex-direction: column; min-height: 0;}
.tabs {display: flex; height: 31px; margin-bottom: 1px; flex: none;}
.tab {display: flex; align-items: center; gap: 8px; width: 200px; padding: 0 16px 2px 14px; border-radius: 5px 5px 0 0; background: #242424;}
.idle {background: none;}
.focus {color: #fff; padding-left: 17px; gap: 12px; border-top: 1px solid; border-image: linear-gradient(90deg, #242424, #1f9fdd, #242424) 1;}
.t-ico {width: 12px; height: 18px;}
.center .viewport {margin-right: 2px;}
.construct {padding: 0 32px 2px 13px; gap: 12px; border-left: 1px solid #3a3a3a; border-radius: 0; height: 20px; margin-top: 6px; width: 198px;}
.f-ico {width: 14px; height: 20px;}
.clip {overflow: hidden; white-space: nowrap;}

.panel-tools {display: flex; gap: 14px; padding: 4px 9px 10px 5px; background: #242424; flex: none;}
.add {height: 30px; width: 73px; flex: none; gap: 5px; padding-left: 10px; border-radius: 5px; background: #383838;}
.add svg {width: 16px; height: 16px;}
.search {display: flex; align-items: center; gap: 12px; flex: 1; min-width: 0; height: 30px; padding: 0 6px 0 5px; border: 1px solid #3a3a3a; border-radius: 15px; background: #0f0f0f;}
.search input {flex: 1; width: 0; border: 0; padding: 0 0 2px; background: none; outline: 0;}
.search input::placeholder {color: #4e4e4e;}

.tree-wrap {display: flex; gap: 5px; height: 178px; padding: 5px 10px 4px 5px; background: #1a1a1a; flex: none;}
.tree {flex: 1;}
.tree li {display: flex; align-items: center; gap: 5px; height: 30px; white-space: nowrap;}
.tree .self {height: 9px; margin-bottom: 10px; padding-left: 6px; align-items: flex-end; overflow: hidden; background: #2b323a;}
.self span {display: flex; align-items: center; gap: 10px; height: 28px;}
.tree .tint {background: #2b323a;}
.tree .d1 {padding-left: 16px;}
.tree .d2 {padding-left: 28px;}
.tree .tint .arrow {margin-right: -2px;}
.tree .d3 {padding-left: 58px;}
.tree .picked {background: #99b2bf; color: #1c1c1c;}
.arrow {color: #888;}
.tt {width: 20px; height: 16px; border: 1px solid #999; color: #eee; font: 14px/13px "Liberation Serif", serif; text-align: center;}
.thumb {width: 10px; border-radius: 5px; background: #575757;}
.tree-thumb {margin-top: 15px;}
.second {margin-top: 7px;}
.bp-tools {gap: 6px; padding-top: 6px; padding-bottom: 8px;}

.blueprint {flex: 1; margin-top: 3px; background: #1a1a1a;}
.head {display: flex; align-items: center; gap: 3px; height: 38px; padding: 0 10px 0 7px; font-size: 17px; background: #2f2f2f;}
.head button {margin-left: auto;}
.graphs {height: 37px;}
.flat {padding-left: 24px;}
.macros {margin-bottom: 2px;}
.head small {font-size: 13px; color: #777;}
.events {padding-bottom: 2px;}
.events li {display: flex; align-items: center; gap: 5px; height: 33px; padding: 0 0 2px 36px; white-space: nowrap;}
.events .top {height: 32px; padding-left: 3px;}
.events .top .s20 {margin: 0 -1px 0 2px;}
.fn-head {height: 42px;}
.fn {display: flex; align-items: center; gap: 5px; height: 35px; padding: 0 0 2px 24px;}
.cat {display: flex; align-items: center; gap: 4px; height: 22px; padding-left: 3px; font-size: 15px;}
.vars {padding-bottom: 3px; color: #c0c0c0;}
.vars li {display: grid; grid-template-columns: 144px 20px; align-items: center; height: 25px; padding-left: 36px; white-space: nowrap;}
.vars svg, .vars .tt {color: #1ba7f0; border-color: #1b74a3;}

/* event graph */
.graph {
	flex: 1;
	position: relative;
	box-shadow: inset 0 0 70px rgba(0,0,0,.35);
	background-color: #262626;
	background-image:
		linear-gradient(90deg, #141414 1px, transparent 1px),
		linear-gradient(#141414 1px, transparent 1px),
		linear-gradient(90deg, #353535 1px, transparent 1px),
		linear-gradient(#353535 1px, transparent 1px);
	background-size: 120px 120px, 120px 120px, 15px 15px, 15px 15px;
	background-position: 109px 0, 0 10px, 4px 0, 0 10px;
}
.crumbs {display: flex; align-items: center; height: 48px; padding: 0 5px; background: rgba(0,0,0,.6);}
.bookmark svg {width: 30px; height: 40px;}
.nav-btns {display: flex; align-items: center; gap: 24px; height: 40px; margin: 0 14px 0 1px; padding: 0 14px 0 11px; border: solid #1c1c1c; border-width: 0 3px;}
.nav-btns svg {width: 24px; height: 20px;}
.path {display: flex; align-items: center; margin: 0 0 2px 17px; font-size: 23px; line-height: 28px; color: #8a8a8a;}
.sep {width: 14px; height: 20px; margin: 2px 10px 0 8px;}
.zoom {margin: 0 0 4px auto; font-size: 26px; line-height: 30px; color: #303030;}
.hint {position: absolute; top: 73px; left: 397px; padding: 1px 12px 0; font-size: 40px; line-height: 56px; border-radius: 5px; background: rgba(0,0,0,.55); color: #a8a8a8; white-space: nowrap;}
.mark {position: absolute; right: 13px; bottom: 12px; font-size: 80px; line-height: 92px; font-weight: bold; color: rgba(255,255,255,.17);}

/* details */
.detail-tools {display: flex; align-items: center; gap: 11px; height: 49px; padding: 3px 5px 0 11px; flex: none; background: #242424; border-bottom: 1px solid #1c1c1c;}
.detail-tools .search {margin-right: 6px; height: 31px; gap: 11px;}
.details {display: flex; flex: 1; min-height: 0; overflow: hidden; background: #1a1a1a; font-size: 13px; line-height: 16px;}
.rows {flex: 1; padding-top: 11px; background: #242424;}
.row {display: grid; grid-template-columns: 114px 277px 64px; height: 36px; border-bottom: 1px solid #1a1a1a;}
.row > * {display: flex; align-items: center; overflow: hidden; white-space: nowrap; border-right: 1px solid #1a1a1a;}
.row > .val {padding-left: 15px; gap: 10px; border-right-width: 2px;}
.row > i {padding-left: 17px; border: 0;}
.row > label, .row > .name {padding-left: 20px; gap: 9px;}
.row.first {height: 33px;}
.row.mid {height: 37px;}
.row.tall {height: 40px;}
.rows h4 {display: flex; align-items: center; height: 36px; padding-left: 10px; border-bottom: 1px solid #1a1a1a; background: #2f2f2f;}
.rows h4.gap {height: 37px; margin-top: 7px; border-top: 1px solid #1a1a1a;}
.rows h4 .s14 {margin-right: 18px;}
.row > .fold {padding-left: 13px; gap: 13px;}
.text {width: 155px; height: 29px; padding: 0 15px 2px; border: 1px solid #444; border-radius: 4px; background: #0f0f0f; outline: 0;}
.thick {padding-left: 14px; color: #fff;}
.socket {width: 96px; background: #2c2c2c; margin-right: -5px;}
.combo {display: flex; align-items: center; justify-content: space-between; width: 155px; height: 32px; padding: 0 15px 0 9px; border: 1px solid #444; border-radius: 4px; background: #0f0f0f;}
.combo input {width: 99px; height: 27px; padding: 0 15px 3px; border: 1px solid #444; border-radius: 4px; background: #0f0f0f; outline: 0;}
.check {appearance: none; width: 23px; height: 23px; border: 1px solid #444; border-radius: 3px; background: #0f0f0f; display: grid; place-items: center;}
.check:checked::after {content: ""; width: 10px; height: 5px; margin-top: -4px; border: solid #1b8ac4; border-width: 0 0 3px 3px; transform: rotate(-45deg);}
.row .sel {font-size: 13px;}
.row .loc {width: 93px; flex: none;}
.row .scale {width: 66px; flex: none;}
.row .scale select {padding-right: 37px; text-overflow: clip;}
.row .area {width: 160px; margin-right: -2px;}
.lock {width: 16px; height: 20px;}
.vec {display: grid; grid-template-columns: repeat(3, 1fr); gap: 2px; width: 253px;}
.plain {gap: 5px;}
.vec input {height: 25px; padding: 0 0 0 14px; border: 1px solid #444; border-radius: 4px; background: #0f0f0f; color: #fff; outline: 0;}
.vec .r {background: linear-gradient(#d12b06, #d12b06) 3px 3px/2px 17px no-repeat #0f0f0f;}
.vec .g {background: linear-gradient(#6aa609, #6aa609) 3px 3px/2px 17px no-repeat #0f0f0f;}
.vec .b {background: linear-gradient(#2a7ff0, #2a7ff0) 3px 3px/3px 17px no-repeat #0f0f0f;}
.seg {display: flex; width: 247px; height: 30px; border-radius: 4px; overflow: hidden; background: #353535;}
.seg button {flex: 1; gap: 6px; padding-left: 20px;}
.seg .on {background: #111;}
.reset {width: 16px; height: 14px;}
.more {justify-content: center; width: 100%; height: 33px; border-bottom: 2px solid #1a1a1a;}
.detail-thumb {height: 254px; margin: 25px 5px 0;}

/* menus */
.menu {position: absolute; padding: 10px 0; border: 1px solid #4f4f4f; background: #383838; color: #fff; box-shadow: 2px 2px 4px rgba(0,0,0,.4);}
.ctx {left: 172px; top: 330px; width: 250px; height: 355px;}
.sub {left: 422px; top: 367px; width: 338px; height: 491px;}
.menu ul {margin: 0 -1px;}
.menu button {width: 100%; height: 27px; padding: 0 11px 2px 33px;}
.menu kbd {margin-left: auto; font: 13px Roboto, sans-serif; color: #b8b8b8;}
.menu .s18 {margin-right: 12px; color: #aaa;}
.menu .s14 {margin-left: auto;}
.menu .hot {background: #26bbff; color: #0f0f0f;}
.menu button:disabled, .menu button:disabled kbd, .menu button:disabled svg {color: #6a6a6a;}
.menu h5 {display: flex; align-items: center; gap: 20px; height: 28px; padding: 0 14px; font-size: 12px; color: #707070;}
.menu h5::after {content: ""; flex: 1; height: 1px; background: #686868;}
.menu .iconed, .sub ul {display: flex; flex-direction: column; justify-content: space-between;}
.menu .iconed {height: 165px; margin-top: 1px;}
.ctx ul + h5 {margin-top: 1px;}
.sub ul {height: 439px;}
.sub h5 {height: 29px; padding-bottom: 1px;}

/* editor status bar */
.status {display: flex; gap: 3px; height: 45px; padding: 5px 4px 0 1px; flex: none;}
.status > * {display: flex; align-items: center; background: #242424;}
.drawer {width: 177px; gap: 6px; padding-left: 16px;}
.console {width: 452px; padding: 0 8px 0 12px; gap: 5px;}
.console input {flex: 1; height: 30px; margin-left: 10px; padding: 0 16px 3px; border: 1px solid #444; border-radius: 4px; background: #0f0f0f; font-size: 15px; outline: 0;}
.console input::placeholder {color: #555;}
.filler {flex: 1;}
.source {width: 194px; padding-left: 10px; gap: 6px;}

/* windows taskbar */
.taskbar {display: flex; height: 50px; flex: none; background: #1f2223;}
.taskbar > button {width: 60px; justify-content: center;}
.taskbar > .app {width: 51px; margin: 0 2px 0 9px; border-bottom: 3px solid #76b9ed; padding-top: 3px;}
.taskbar > .active {width: 61px; margin-left: 4px; background: #4a4c4d;}
.tray {display: flex; align-items: center; gap: 10px; margin-left: auto; color: #fff;}
.cloud {width: 28px; height: 20px;}
.weather {font: 18px/24px "Open Sans", "Noto Sans CJK SC", sans-serif; margin-right: 11px;}
.lang {margin-left: 6px; font-size: 17px; font-weight: bold;}
.ime-mini {width: 18px; height: 18px; margin: 0 65px 0 10px; border-radius: 7px; background: #2f6df8; font: bold 13px/18px "Noto Sans CJK SC", sans-serif; text-align: center;}
.clock {display: flex; flex-direction: column; align-items: center; width: 74px; font: 15px/20px "Open Sans", "Noto Sans CJK SC", sans-serif; white-space: nowrap; margin-top: -3px;}
.notice {position: relative; margin: -8px 31px 0 67px;}
.notice svg {width: 20px; height: 18px;}
.notice b {position: absolute; left: 9px; top: 9px; width: 21px; height: 21px; border: 1px solid #888; border-radius: 50%; background: rgba(31,34,35,.9); font-size: 14px; line-height: 19px; text-align: center;}

/* floating tools */
.orb {position: absolute; right: -6px; top: 28px; width: 52px; height: 52px;}
.netball {position: absolute; right: 14px; top: 482px; width: 186px; height: 88px; padding-top: 20px;}
.speeds {display: flex; align-items: center; width: 120px; height: 49px; margin-left: auto; padding: 0 10px 0 22px; border-radius: 0 25px 25px 0; background: #f6f6f6; color: #222; font: 11px/20px "Noto Sans", sans-serif;}
.speeds > svg {width: 10px; height: 34px;}
.speeds p {margin: 0 auto; padding: 0 0 3px 12px;}
.speeds p span {display: block;}
.glow {position: absolute; left: 0; top: 0; width: 84px; height: 88px;}
.ball {position: absolute; left: 0; top: 26px; width: 84px; color: #555; font: 300 28px/34px "Open Sans", sans-serif; text-align: center;}
.ball small {font-size: 14px; font-weight: 400;}
.ime {position: absolute; right: 243px; top: 861px; display: flex; align-items: center; justify-content: space-between; width: 317px; height: 35px; padding: 0 9px 2px 27px; border: 1px solid #3d5f95; background: #fff; color: #2f78e4;}
.ime svg {width: 20px; height: 20px;}
.ime .faint {opacity: .3;}
.ime span {font-size: 18px; font-weight: bold;}
.ime-logo {position: absolute; left: -17px; top: -3px; width: 33px; height: 34px; border-radius: 13px; background: linear-gradient(#2b5cf5 50%, #38b5fb); color: #fff; font: bold 23px/31px "Noto Sans CJK SC", sans-serif; text-align: center;}
.red-dot {position: absolute; right: 63px; top: 2px; width: 9px; height: 9px; border-radius: 50%; background: #f9512d;}
.activate {position: absolute; left: 1593px; top: 925px; color: rgba(255,255,255,.42); font: 18px/24px "Open Sans", "Noto Sans CJK SC", sans-serif; white-space: nowrap;}
.activate p:first-child {font-size: 25px; line-height: 32px;}
.blog-url {position: absolute; right: 11px; bottom: 8px; color: rgba(255,255,255,.65); font: 16px/22px "Liberation Sans", sans-serif; text-shadow: 1px 1px 1px rgba(0,0,0,.5);}
```
